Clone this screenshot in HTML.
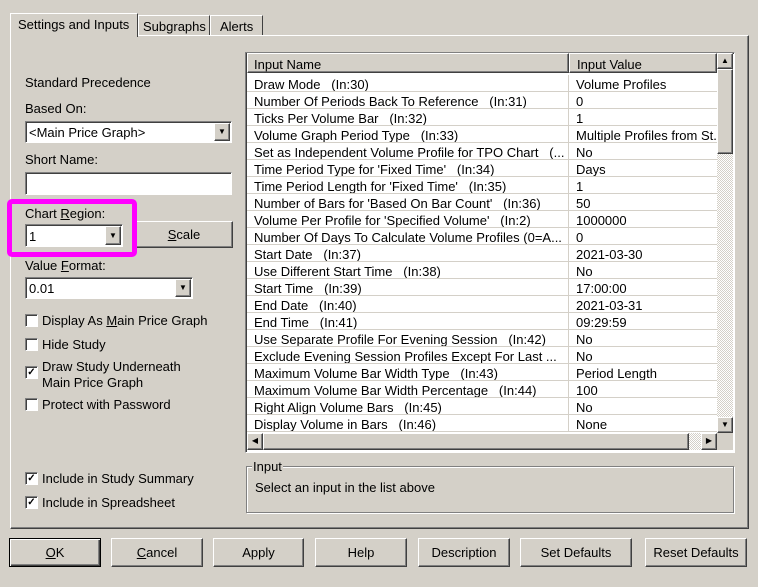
<!DOCTYPE html>
<html><head><style>
*{box-sizing:border-box;margin:0;padding:0}
body{width:758px;height:587px;background:#d4d0c8;font-family:"Liberation Sans",Arial,sans-serif;font-size:13px;color:#000;position:relative;overflow:hidden}
.a{position:absolute}
.raised{background:#d4d0c8;border:1px solid;border-color:#fff #404040 #404040 #fff;box-shadow:inset -1px -1px 0 #808080}
.sunk{background:#fff;border:1px solid;border-color:#808080 #fff #fff #808080;box-shadow:inset 1px 1px 0 #404040}
.btn{position:absolute;top:538px;height:29px;text-align:center;line-height:28px}
.cb{position:absolute;width:13px;height:13px;background:#fff;border:1px solid;border-color:#808080 #fff #fff #808080;box-shadow:inset 1px 1px 0 #404040;font-size:10px;line-height:11px;text-align:center;font-weight:bold}
.row{position:absolute;left:0;width:470px;height:17px;border-bottom:1px solid #d4d0c8;white-space:nowrap;overflow:hidden}
.row span{position:absolute;top:2px}
.row .n{left:7px;width:314px;overflow:hidden}
.row .v{left:329px;width:141px;overflow:hidden}
.row:before{content:"";position:absolute;left:321px;top:0;width:1px;height:17px;background:#d4d0c8}
.arr{font-size:8px;text-align:center;line-height:14px}
</style></head><body>
<div class="a" style="left:10px;top:35px;width:739px;height:494px;border:1px solid;border-color:#fff #404040 #404040 #fff;box-shadow:inset -1px -1px 0 #808080"></div>
<div class="a" style="left:10px;top:13px;width:128px;height:24px;background:#d4d0c8;border:1px solid;border-color:#fff #404040 transparent #fff;border-bottom:none;padding:3px 0 0 7px">Settings and Inputs</div>
<div class="a" style="left:138px;top:15px;width:72px;height:20px;border:1px solid;border-color:#fff #404040 transparent #fff;border-bottom:none;padding:3px 0 0 4px">Subgraphs</div>
<div class="a" style="left:210px;top:15px;width:53px;height:20px;border:1px solid;border-color:#fff #404040 transparent #fff;border-bottom:none;padding:3px 0 0 9px">Alerts</div>

<div class="a" style="left:25px;top:75px">Standard Precedence</div>
<div class="a" style="left:25px;top:101px">Based On:</div>
<div class="a sunk" style="left:25px;top:121px;width:207px;height:22px;padding:3px 0 0 3px">&lt;Main Price Graph&gt;</div>
<div class="a raised arr" style="left:214px;top:123px;width:16px;height:18px;line-height:16px">▼</div>
<div class="a" style="left:25px;top:152px">Short Name:</div>
<div class="a sunk" style="left:25px;top:172px;width:207px;height:23px"></div>
<div class="a" style="left:25px;top:206px">Chart <u>R</u>egion:</div>
<div class="a sunk" style="left:25px;top:224px;width:98px;height:23px;padding:4px 0 0 3px">1</div>
<div class="a raised arr" style="left:105px;top:226px;width:16px;height:19px;line-height:17px">▼</div>
<div class="a raised" style="left:135px;top:221px;width:98px;height:27px;text-align:center;line-height:26px"><u>S</u>cale</div>
<div class="a" style="left:7px;top:199px;width:130px;height:58px;border:5px solid #ff00ff;border-radius:5px"></div>
<div class="a" style="left:25px;top:258px">Value <u>F</u>ormat:</div>
<div class="a sunk" style="left:25px;top:277px;width:168px;height:22px;padding:3px 0 0 3px">0.01</div>
<div class="a raised arr" style="left:175px;top:279px;width:16px;height:18px;line-height:16px">▼</div>

<div class="cb" style="left:25px;top:314px"></div><div class="a" style="left:42px;top:313px">Display As <u>M</u>ain Price Graph</div>
<div class="cb" style="left:25px;top:338px"></div><div class="a" style="left:42px;top:337px">Hide Study</div>
<div class="cb" style="left:25px;top:366px">✓</div><div class="a" style="left:42px;top:359px;line-height:16px">Draw Study Underneath<br>Main Price Graph</div>
<div class="cb" style="left:25px;top:398px"></div><div class="a" style="left:42px;top:397px">Protect with Password</div>
<div class="cb" style="left:25px;top:472px">✓</div><div class="a" style="left:42px;top:471px">Include in Study Summary</div>
<div class="cb" style="left:25px;top:496px">✓</div><div class="a" style="left:42px;top:495px">Include in Spreadsheet</div>

<div class="a" style="left:245px;top:52px;width:490px;height:401px;border:1px solid;border-color:#808080 #fff #fff #808080;background:#fff;box-shadow:inset 1px 1px 0 #404040"></div>
<div class="a raised" style="left:247px;top:53px;width:322px;height:20px;padding:3px 0 0 6px">Input Name</div>
<div class="a raised" style="left:569px;top:53px;width:148px;height:20px;padding:3px 0 0 7px">Input Value</div>
<div class="a" style="left:247px;top:75px;width:470px;height:358px;overflow:hidden;background:#fff">
<div class="row" style="top:0"><span class="n">Draw Mode&nbsp;&nbsp;&nbsp;(In:30)</span><span class="v">Volume Profiles</span></div>
<div class="row" style="top:17px"><span class="n">Number Of Periods Back To Reference&nbsp;&nbsp;&nbsp;(In:31)</span><span class="v">0</span></div>
<div class="row" style="top:34px"><span class="n">Ticks Per Volume Bar&nbsp;&nbsp;&nbsp;(In:32)</span><span class="v">1</span></div>
<div class="row" style="top:51px"><span class="n">Volume Graph Period Type&nbsp;&nbsp;&nbsp;(In:33)</span><span class="v">Multiple Profiles from St.</span></div>
<div class="row" style="top:68px"><span class="n">Set as Independent Volume Profile for TPO Chart&nbsp;&nbsp;&nbsp;(...</span><span class="v">No</span></div>
<div class="row" style="top:85px"><span class="n">Time Period Type for 'Fixed Time'&nbsp;&nbsp;&nbsp;(In:34)</span><span class="v">Days</span></div>
<div class="row" style="top:102px"><span class="n">Time Period Length for 'Fixed Time'&nbsp;&nbsp;&nbsp;(In:35)</span><span class="v">1</span></div>
<div class="row" style="top:119px"><span class="n">Number of Bars for 'Based On Bar Count'&nbsp;&nbsp;&nbsp;(In:36)</span><span class="v">50</span></div>
<div class="row" style="top:136px"><span class="n">Volume Per Profile for 'Specified Volume'&nbsp;&nbsp;&nbsp;(In:2)</span><span class="v">1000000</span></div>
<div class="row" style="top:153px"><span class="n">Number Of Days To Calculate Volume Profiles (0=A...</span><span class="v">0</span></div>
<div class="row" style="top:170px"><span class="n">Start Date&nbsp;&nbsp;&nbsp;(In:37)</span><span class="v">2021-03-30</span></div>
<div class="row" style="top:187px"><span class="n">Use Different Start Time&nbsp;&nbsp;&nbsp;(In:38)</span><span class="v">No</span></div>
<div class="row" style="top:204px"><span class="n">Start Time&nbsp;&nbsp;&nbsp;(In:39)</span><span class="v">17:00:00</span></div>
<div class="row" style="top:221px"><span class="n">End Date&nbsp;&nbsp;&nbsp;(In:40)</span><span class="v">2021-03-31</span></div>
<div class="row" style="top:238px"><span class="n">End Time&nbsp;&nbsp;&nbsp;(In:41)</span><span class="v">09:29:59</span></div>
<div class="row" style="top:255px"><span class="n">Use Separate Profile For Evening Session&nbsp;&nbsp;&nbsp;(In:42)</span><span class="v">No</span></div>
<div class="row" style="top:272px"><span class="n">Exclude Evening Session Profiles Except For Last ...</span><span class="v">No</span></div>
<div class="row" style="top:289px"><span class="n">Maximum Volume Bar Width Type&nbsp;&nbsp;&nbsp;(In:43)</span><span class="v">Period Length</span></div>
<div class="row" style="top:306px"><span class="n">Maximum Volume Bar Width Percentage&nbsp;&nbsp;&nbsp;(In:44)</span><span class="v">100</span></div>
<div class="row" style="top:323px"><span class="n">Right Align Volume Bars&nbsp;&nbsp;&nbsp;(In:45)</span><span class="v">No</span></div>
<div class="row" style="top:340px"><span class="n">Display Volume in Bars&nbsp;&nbsp;&nbsp;(In:46)</span><span class="v">None</span></div>
</div>
<div class="a" style="left:717px;top:53px;width:16px;height:380px;background:repeating-conic-gradient(#fff 0 25%,#d4d0c8 0 50%) 0 0/2px 2px"></div>
<div class="a raised arr" style="left:717px;top:53px;width:16px;height:16px">▲</div>
<div class="a raised" style="left:717px;top:69px;width:16px;height:85px"></div>
<div class="a raised arr" style="left:717px;top:417px;width:16px;height:16px">▼</div>
<div class="a" style="left:247px;top:433px;width:470px;height:17px;background:repeating-conic-gradient(#fff 0 25%,#d4d0c8 0 50%) 0 0/2px 2px"></div>
<div class="a raised arr" style="left:247px;top:433px;width:16px;height:17px">◀</div>
<div class="a raised" style="left:263px;top:433px;width:426px;height:17px"></div>
<div class="a raised arr" style="left:701px;top:433px;width:16px;height:17px">▶</div>
<div class="a" style="left:717px;top:433px;width:16px;height:17px;background:#d4d0c8"></div>

<div class="a" style="left:246px;top:466px;width:488px;height:47px;border:1px solid #808080;box-shadow:1px 1px 0 #fff,inset 1px 1px 0 #fff"></div>
<div class="a" style="left:252px;top:459px;background:#d4d0c8;padding:0 1px">Input</div>
<div class="a" style="left:255px;top:480px">Select an input in the list above</div>

<div class="btn raised" style="left:9px;width:92px;border:1px solid #000;box-shadow:inset 1px 1px 0 #fff,inset -1px -1px 0 #404040,inset -2px -2px 0 #808080"><u>O</u>K</div>
<div class="btn raised" style="left:111px;width:92px"><u>C</u>ancel</div>
<div class="btn raised" style="left:213px;width:91px">Apply</div>
<div class="btn raised" style="left:315px;width:92px">Help</div>
<div class="btn raised" style="left:418px;width:92px">Description</div>
<div class="btn raised" style="left:520px;width:112px">Set Defaults</div>
<div class="btn raised" style="left:645px;width:102px">Reset Defaults</div>
</body></html>
